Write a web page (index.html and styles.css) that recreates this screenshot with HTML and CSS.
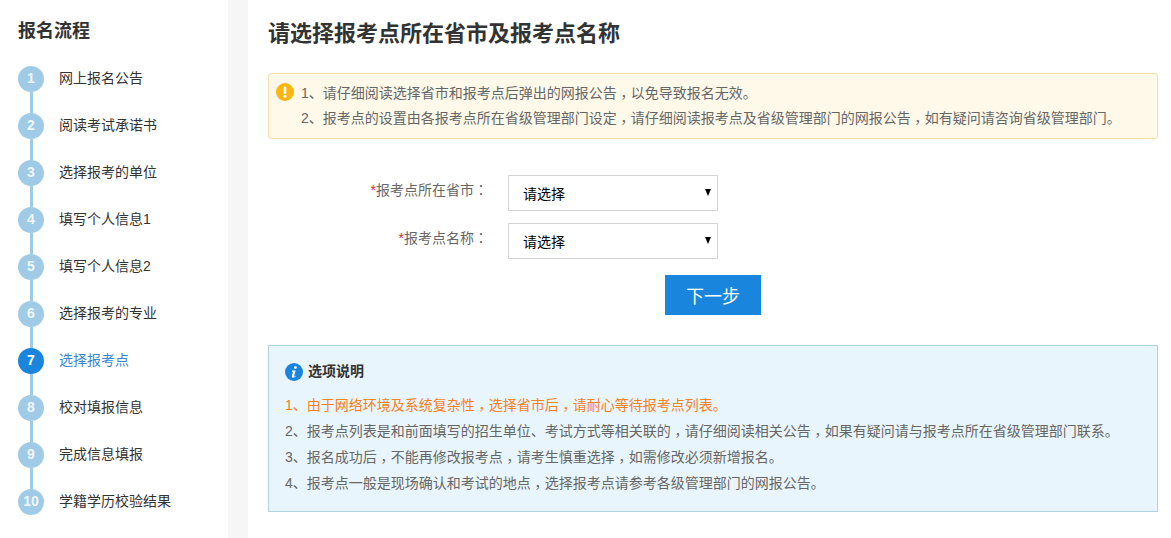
FILE: index.html
```html
<!DOCTYPE html>
<html lang="zh-CN">
<head>
<meta charset="utf-8">
<title>报名流程</title>
<link rel="stylesheet" href="styles.css">
</head>
<body>
<div class="page">
  <aside class="sidebar">
    <h2 class="side-title">报名流程</h2>
    <ol class="steps">
      <li class="step"><span class="num">1</span><span class="step-text">网上报名公告</span></li>
      <li class="step"><span class="num">2</span><span class="step-text">阅读考试承诺书</span></li>
      <li class="step"><span class="num">3</span><span class="step-text">选择报考的单位</span></li>
      <li class="step"><span class="num">4</span><span class="step-text">填写个人信息1</span></li>
      <li class="step"><span class="num">5</span><span class="step-text">填写个人信息2</span></li>
      <li class="step"><span class="num">6</span><span class="step-text">选择报考的专业</span></li>
      <li class="step active"><span class="num">7</span><span class="step-text">选择报考点</span></li>
      <li class="step"><span class="num">8</span><span class="step-text">校对填报信息</span></li>
      <li class="step"><span class="num">9</span><span class="step-text">完成信息填报</span></li>
      <li class="step"><span class="num">10</span><span class="step-text">学籍学历校验结果</span></li>
    </ol>
  </aside>
  <div class="gutter"></div>
  <main class="main">
    <h1 class="title">请选择报考点所在省市及报考点名称</h1>
    <div class="warn">
      <svg class="warn-icon" width="18" height="18" viewBox="0 0 18 18"><circle cx="9" cy="9" r="9" fill="#fbb50f"/><rect x="7.7" y="3.5" width="2.6" height="7.4" rx="1.2" fill="#fff"/><circle cx="9" cy="13.2" r="1.5" fill="#fff"/></svg>
      <div class="warn-text">
        <p>1、请仔细阅读选择省市和报考点后弹出的网报公告<span class="punct comma" lang="zh-TW">，</span>以免导致报名无效。</p>
        <p>2、报考点的设置由各报考点所在省级管理部门设定<span class="punct comma" lang="zh-TW">，</span>请仔细阅读报考点及省级管理部门的网报公告<span class="punct comma" lang="zh-TW">，</span>如有疑问请咨询省级管理部门。</p>
      </div>
    </div>
    <form class="form">
      <div class="row">
        <label class="label"><span class="req">*</span>报考点所在省市<span class="punct" lang="zh-TW">：</span></label>
        <span class="select-wrap"><select class="select"><option>请选择</option></select></span>
      </div>
      <div class="row">
        <label class="label"><span class="req">*</span>报考点名称<span class="punct" lang="zh-TW">：</span></label>
        <span class="select-wrap"><select class="select"><option>请选择</option></select></span>
      </div>
      <div class="actions"><button type="button" class="next">下一步</button></div>
    </form>
    <section class="info">
      <div class="info-head">
        <svg width="18" height="18" viewBox="0 0 18 18"><circle cx="9" cy="9" r="9" fill="#1a85dc"/><circle cx="10.4" cy="4.6" r="1.4" fill="#fff"/><path d="M7.2 7.6h3.4l-1.5 5.6c-.1.4.3.5.6.3l1-.7.2.5c-1 .9-1.9 1.4-2.9 1.4-.9 0-1.3-.5-1.1-1.4l1-4.3-.9-.2z" fill="#fff"/></svg>
        <strong>选项说明</strong>
      </div>
      <p class="hl">1、由于网络环境及系统复杂性<span class="punct comma" lang="zh-TW">，</span>选择省市后<span class="punct comma" lang="zh-TW">，</span>请耐心等待报考点列表。</p>
      <p>2、报考点列表是和前面填写的招生单位、考试方式等相关联的<span class="punct comma" lang="zh-TW">，</span>请仔细阅读相关公告<span class="punct comma" lang="zh-TW">，</span>如果有疑问请与报考点所在省级管理部门联系。</p>
      <p>3、报名成功后<span class="punct comma" lang="zh-TW">，</span>不能再修改报考点<span class="punct comma" lang="zh-TW">，</span>请考生慎重选择<span class="punct comma" lang="zh-TW">，</span>如需修改必须新增报名。</p>
      <p>4、报考点一般是现场确认和考试的地点<span class="punct comma" lang="zh-TW">，</span>选择报考点请参考各级管理部门的网报公告。</p>
    </section>
  </main>
</div>
</body>
</html>
```
FILE: styles.css
```css
* { box-sizing: border-box; }
html, body { margin: 0; padding: 0; background: #fff; }
body {
  font-family: "Liberation Sans", "Noto Sans CJK SC", sans-serif;
  font-size: 14px;
  color: #666;
  overflow: hidden;
}
p, h1, h2, ol { margin: 0; padding: 0; }
.punct { font-family: "Noto Sans CJK TC", sans-serif; line-height: 0; }
.comma { vertical-align: -4px; }
.page { display: flex; width: 1171px; height: 538px; overflow: hidden; }

.sidebar { width: 228px; flex: none; padding: 19px 0 0 18px; }
.side-title { font-size: 18px; line-height: 25px; font-weight: 700; color: #333; }
.steps { list-style: none; margin-top: 22px; }
.step {
  position: relative;
  display: flex;
  align-items: flex-start;
  height: 47px;
  color: #333;
}
.step:not(:last-child)::after {
  content: "";
  position: absolute;
  left: 12px;
  top: 26px;
  width: 3px;
  height: 21px;
  background: #a0cbe6;
}
.num {
  width: 26px;
  height: 26px;
  border-radius: 50%;
  background: #a0cbe6;
  color: rgba(255, 255, 255, .85);
  font-size: 14px;
  font-weight: 700;
  line-height: 25px;
  text-align: center;
  flex: none;
}
.step-text { margin-left: 15px; line-height: 24px; }
.step.active .num { background: #1a85dc; color: #fff; }
.step.active .step-text { color: #3a86d0; }

.gutter { width: 20px; flex: none; background: #f6f6f6; }

.main { flex: none; width: 923px; padding: 19px 0 0 20px; }
.title { font-size: 22px; line-height: 30px; font-weight: 700; color: #333; }

.warn {
  display: flex;
  width: 890px;
  height: 66px;
  margin-top: 24px;
  padding: 7px 0 0 7px;
  background: #fff9ea;
  border: 1px solid #f5dfa8;
  border-radius: 3px;
}
.warn-icon { flex: none; margin: 2px 7px 0 0; }
.warn-text p { line-height: 25px; }

.form { margin-top: 36px; width: 890px; }
.row { display: flex; align-items: flex-start; height: 48px; }
.label { width: 220px; text-align: right; line-height: 30px; color: #666; white-space: nowrap; }
.req { color: #d9252b; }
.select-wrap {
  position: relative;
  display: block;
  width: 210px;
  height: 36px;
  margin-left: 20px;
}
.select-wrap::after {
  content: "";
  position: absolute;
  right: 7px;
  top: 14px;
  border-left: 3.5px solid transparent;
  border-right: 3.5px solid transparent;
  border-top: 7px solid #000;
  pointer-events: none;
}
.select {
  display: block;
  width: 210px;
  height: 36px;
  padding: 2px 0 0 14px;
  border: 1px solid #d4d4d4;
  border-radius: 0;
  background: #fff;
  color: #000;
  font-family: inherit;
  font-size: 14px;
  appearance: none;
  -webkit-appearance: none;
}
.actions { padding: 4px 0 0 397px; }
.next {
  display: block;
  width: 96px;
  height: 40px;
  border: 0;
  padding: 0;
  background: #1a85dc;
  color: #fff;
  font-family: inherit;
  font-size: 18px;
}

.info {
  width: 890px;
  height: 167px;
  margin-top: 30px;
  padding: 13px 16px 0;
  background: #e9f5fc;
  border: 1px solid #b2d2e3;
  color: #666;
}
.info-head { display: flex; align-items: center; gap: 5px; height: 22px; margin-bottom: 11px; }
.info-head svg { flex: none; margin-top: 3px; }
.info-head strong { font-size: 14px; color: #333; }
.info p { line-height: 26px; }
.info p.hl { color: #f5811f; }
```
